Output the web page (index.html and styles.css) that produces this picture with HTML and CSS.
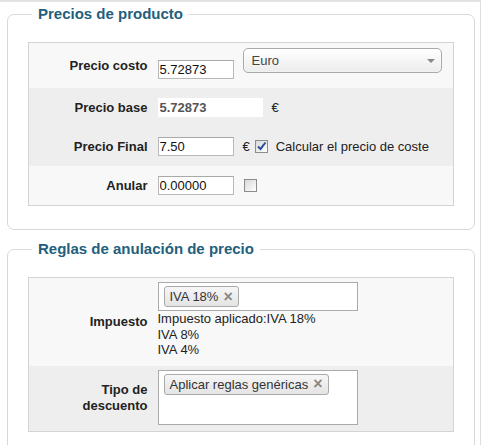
FILE: index.html
```html
<!DOCTYPE html>
<html lang="es">
<head>
    <meta charset="UTF-8">
    <meta name="viewport" content="width=device-width, initial-scale=1.0">
    <title>Precios de producto</title>
    <link rel="stylesheet" href="styles.css">
</head>
<body>
    <div class="panel">
        <fieldset class="box">
            <legend>Precios de producto</legend>
            <table class="grid">
                <tr class="row-light row-top">
                    <th>Precio costo</th>
                    <td>
                        <div class="cost">
                            <input class="num" type="text" value="5.72873">
                            <span class="select-wrap">
                                <select>
                                    <option>Euro</option>
                                </select>
                            </span>
                        </div>
                    </td>
                </tr>
                <tr class="row-dark">
                    <th>Precio base</th>
                    <td>
                        <div class="line">
                            <input class="readonly" type="text" value="5.72873" readonly>
                            <span class="cur cur-base">€</span>
                        </div>
                    </td>
                </tr>
                <tr class="row-dark">
                    <th>Precio Final</th>
                    <td>
                        <div class="line">
                            <input class="num" type="text" value="7.50">
                            <span class="cur">€</span>
                            <span class="check">
                                <svg width="11" height="11" viewBox="0 0 11 11"><path d="M2 5.5 L4.5 8 L9.5 1.5" fill="none" stroke="#2c4d98" stroke-width="2"/></svg>
                            </span>
                            <span class="check-text">Calcular el precio de coste</span>
                        </div>
                    </td>
                </tr>
                <tr class="row-light">
                    <th>Anular</th>
                    <td>
                        <div class="line">
                            <input class="num" type="text" value="0.00000">
                            <span class="check check-off"></span>
                        </div>
                    </td>
                </tr>
            </table>
        </fieldset>

        <fieldset class="box box-rules">
            <legend>Reglas de anulación de precio</legend>
            <table class="grid">
                <tr class="row-light row-tax">
                    <th>Impuesto</th>
                    <td>
                        <div class="tags">
                            <span class="tag">IVA 18% <span class="tag-x">×</span></span>
                        </div>
                        <div class="tax-info">
                            Impuesto aplicado:IVA 18%<br>
                            IVA 8%<br>
                            IVA 4%
                        </div>
                    </td>
                </tr>
                <tr class="row-dark row-discount">
                    <th>Tipo de descuento</th>
                    <td>
                        <div class="tags tags-tall">
                            <span class="tag">Aplicar reglas genéricas <span class="tag-x">×</span></span>
                        </div>
                    </td>
                </tr>
            </table>
        </fieldset>
    </div>
</body>
</html>
```

FILE: styles.css
```css
* {
    margin: 0;
    padding: 0;
    box-sizing: border-box;
    font-family: "Liberation Sans", Arial, sans-serif;
}

body {
    background-color: #fff;
    color: #222;
    font-size: 13px;
}

.panel {
    width: 481px;
    border-top: 2px solid #e2e2e2;
    border-right: 1px solid #dedede;
    padding-bottom: 20px;
}

.box {
    width: 468px;
    margin: 3px 0 0 7px;
    padding: 19px 20px 23px;
    border: 1px solid #d9d9d9;
    border-radius: 7px;
}

.box-rules {
    margin-top: 10px;
}

.box legend {
    margin-left: 4px;
    padding: 0 6px;
    font-size: 15px;
    line-height: 18px;
    font-weight: bold;
    color: #235f7d;
}

.grid {
    width: 100%;
    border-collapse: collapse;
    border: 1px solid #d4d4d4;
}

.grid th {
    width: 124px;
    padding: 10px 5px;
    text-align: right;
    font-size: 13px;
    line-height: 16px;
    font-weight: bold;
    color: #222;
    vertical-align: middle;
}

.grid td {
    padding: 10px 5px;
    vertical-align: middle;
}

.row-light {
    background-color: #f8f8f8;
}

.row-dark {
    background-color: #eeeeee;
}

/* first row holds the currency select */
.row-top th {
    vertical-align: top;
    padding-top: 15px;
}

.row-top td {
    padding: 5px 5px 9px;
}

.cost {
    display: flex;
    align-items: flex-start;
}

.cost .num {
    margin-top: 12px;
}

.line {
    display: flex;
    align-items: center;
}

.num {
    width: 76px;
    height: 19px;
    padding: 0 1px;
    border: 1px solid #b9b9b9;
    border-top-color: #a9a9a9;
    background-color: #fff;
    font-size: 13px;
    color: #111;
}

.readonly {
    width: 105px;
    height: 19px;
    padding: 0 2px;
    border: none;
    background-color: #fff;
    font-size: 13px;
    font-weight: bold;
    color: #555;
}

.cur {
    margin-left: 9px;
    font-size: 13px;
    color: #222;
}

.cur-base {
    margin-left: 9px;
}

.select-wrap {
    position: relative;
    display: inline-block;
    margin-left: 9px;
}

.select-wrap select {
    appearance: none;
    -webkit-appearance: none;
    width: 199px;
    height: 25px;
    padding: 0 8px;
    border: 1px solid #aaa;
    border-radius: 5px;
    background: linear-gradient(#ffffff, #ececec);
    font-size: 13px;
    color: #444;
    box-shadow: inset 0 0 2px #fff;
}

.select-wrap::after {
    content: "";
    position: absolute;
    right: 7px;
    top: 11px;
    border-top: 4px solid #888;
    border-left: 4px solid transparent;
    border-right: 4px solid transparent;
}

.check {
    display: inline-flex;
    align-items: center;
    justify-content: center;
    width: 13px;
    height: 13px;
    margin-left: 5px;
    border: 1px solid #8c8c8c;
    background: linear-gradient(135deg, #d8d8d8, #ffffff);
}

.check-off {
    margin-left: 10px;
}

.check-text {
    margin-left: 8px;
    font-size: 13px;
    color: #222;
}

/* tag inputs */
.row-tax td {
    padding: 4px 5px 8px;
}

.row-discount td {
    padding: 4px 5px 6px;
}

.tags {
    width: 200px;
    height: 29px;
    padding: 3px 5px;
    border: 1px solid #aaa;
    background-color: #fff;
}

.tags-tall {
    height: 55px;
}

.tag {
    display: inline-flex;
    align-items: center;
    height: 21px;
    padding: 0 5px;
    border: 1px solid #aaa;
    border-radius: 3px;
    background: linear-gradient(#f6f6f6, #e4e4e4);
    font-size: 13px;
    color: #333;
}

.tag-x {
    margin-left: 5px;
    font-size: 16px;
    font-weight: bold;
    color: #888;
}

.tax-info {
    font-size: 13px;
    line-height: 15.5px;
    color: #222;
}
```
